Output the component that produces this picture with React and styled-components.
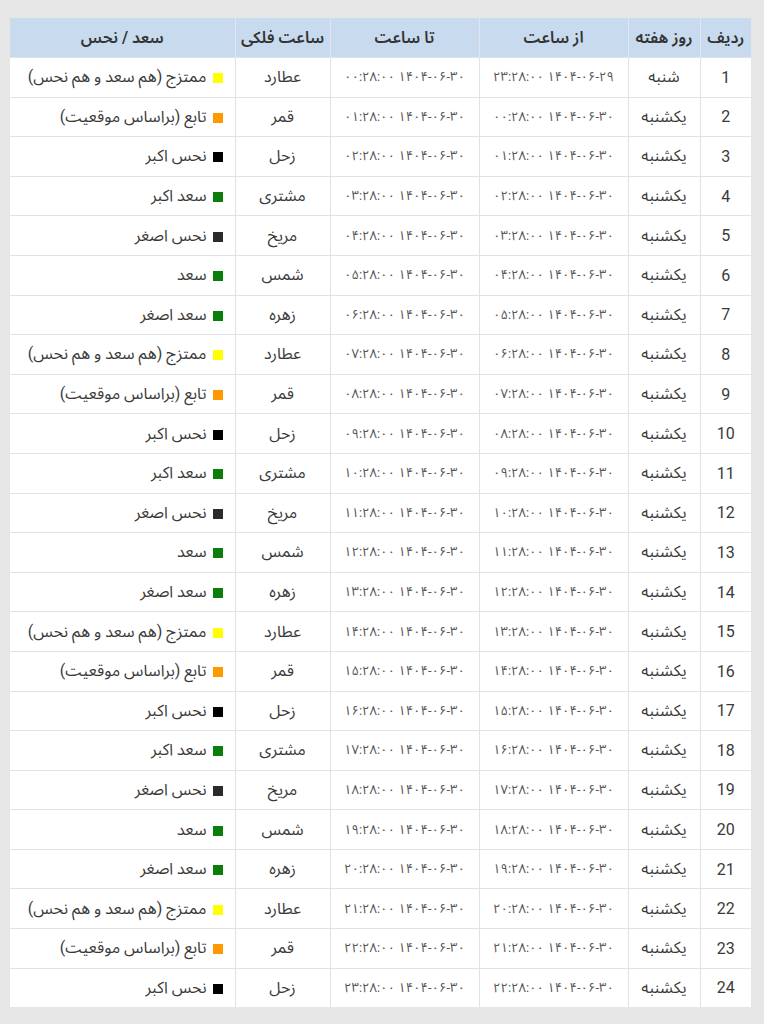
import React from "react";
import styled, { createGlobalStyle } from "styled-components";

const GlobalStyle = createGlobalStyle`
  html, body {
    margin: 0;
    padding: 0;
    background: #e6e6e6;
  }
  body {
    font-family: Roboto, "Noto Sans Arabic", "DejaVu Sans", sans-serif;
    color: #333;
  }
`;

const Page = styled.div`
  min-height: 1024px;
  padding: 18px 13px 0 10px;
  box-sizing: border-box;
  background: #e6e6e6;
`;

const Table = styled.table`
  direction: rtl;
  width: 741px;
  table-layout: fixed;
  border-collapse: collapse;
  background: #fff;
`;

const HeadCell = styled.th`
  height: 39px;
  padding: 0 4px;
  background: #c7daee;
  color: #333;
  font-size: 16px;
  font-weight: 600;
  text-align: center;
  white-space: nowrap;
  border-left: 1px solid #dfe6ee;
  &:last-child { border-left: none; }
`;

const Row = styled.tr`
  border-top: 1px solid #e2e2e2;
`;

const Cell = styled.td`
  height: 38.6px;
  padding: 0 8px;
  font-size: ${(p) => (p.$small ? "13px" : "16px")};
  color: ${(p) => (p.$small ? "#555" : "#3a3a3a")};
  text-align: ${(p) => (p.$align === "start" ? "right" : "center")};
  padding-right: ${(p) => (p.$align === "start" ? "12px" : "8px")};
  border-left: 1px solid #e2e2e2;
  white-space: nowrap;
  &:last-child { border-left: none; }
`;

const Swatch = styled.span`
  display: inline-block;
  width: 10px;
  height: 10px;
  margin-left: 6px;
  background: ${(p) => p.$color};
  vertical-align: -1px;
`;

const fa = (s) => s.replace(/\d/g, (d) => "۰۱۲۳۴۵۶۷۸۹"[d]);
const pad = (n) => String(n).padStart(2, "0");

const planets = [
  { name: "عطارد", color: "#ffff00", label: "ممتزج (هم سعد و هم نحس)" },
  { name: "قمر", color: "#ff9900", label: "تابع (براساس موقعیت)" },
  { name: "زحل", color: "#000000", label: "نحس اکبر" },
  { name: "مشتری", color: "#0a7d0a", label: "سعد اکبر" },
  { name: "مریخ", color: "#2b2b2b", label: "نحس اصغر" },
  { name: "شمس", color: "#0a7d0a", label: "سعد" },
  { name: "زهره", color: "#0a7d0a", label: "سعد اصغر" },
];

const rows = Array.from({ length: 24 }, (_, i) => {
  const p = planets[i % 7];
  const fromHour = i === 0 ? 23 : i - 1;
  const fromDate = i === 0 ? "1404-06-29" : "1404-06-30";
  return {
    n: i + 1,
    day: i === 0 ? "شنبه" : "یکشنبه",
    from: fa(`${fromDate} ${pad(fromHour)}:28:00`),
    to: fa(`1404-06-30 ${pad(i)}:28:00`),
    planet: p,
  };
});

export default function App() {
  return (
    <>
      <GlobalStyle />
      <Page>
        <Table>
          <colgroup>
            <col style={{ width: 51 }} />
            <col style={{ width: 72 }} />
            <col style={{ width: 149 }} />
            <col style={{ width: 149 }} />
            <col style={{ width: 95 }} />
            <col style={{ width: 225 }} />
          </colgroup>
          <thead>
            <tr>
              <HeadCell>ردیف</HeadCell>
              <HeadCell>روز هفته</HeadCell>
              <HeadCell>از ساعت</HeadCell>
              <HeadCell>تا ساعت</HeadCell>
              <HeadCell>ساعت فلکی</HeadCell>
              <HeadCell>سعد / نحس</HeadCell>
            </tr>
          </thead>
          <tbody>
            {rows.map((r) => (
              <Row key={r.n}>
                <Cell>{r.n}</Cell>
                <Cell>{r.day}</Cell>
                <Cell $small>{r.from}</Cell>
                <Cell $small>{r.to}</Cell>
                <Cell>{r.planet.name}</Cell>
                <Cell $align="start">
                  <Swatch $color={r.planet.color} />
                  {r.planet.label}
                </Cell>
              </Row>
            ))}
          </tbody>
        </Table>
      </Page>
    </>
  );
}
